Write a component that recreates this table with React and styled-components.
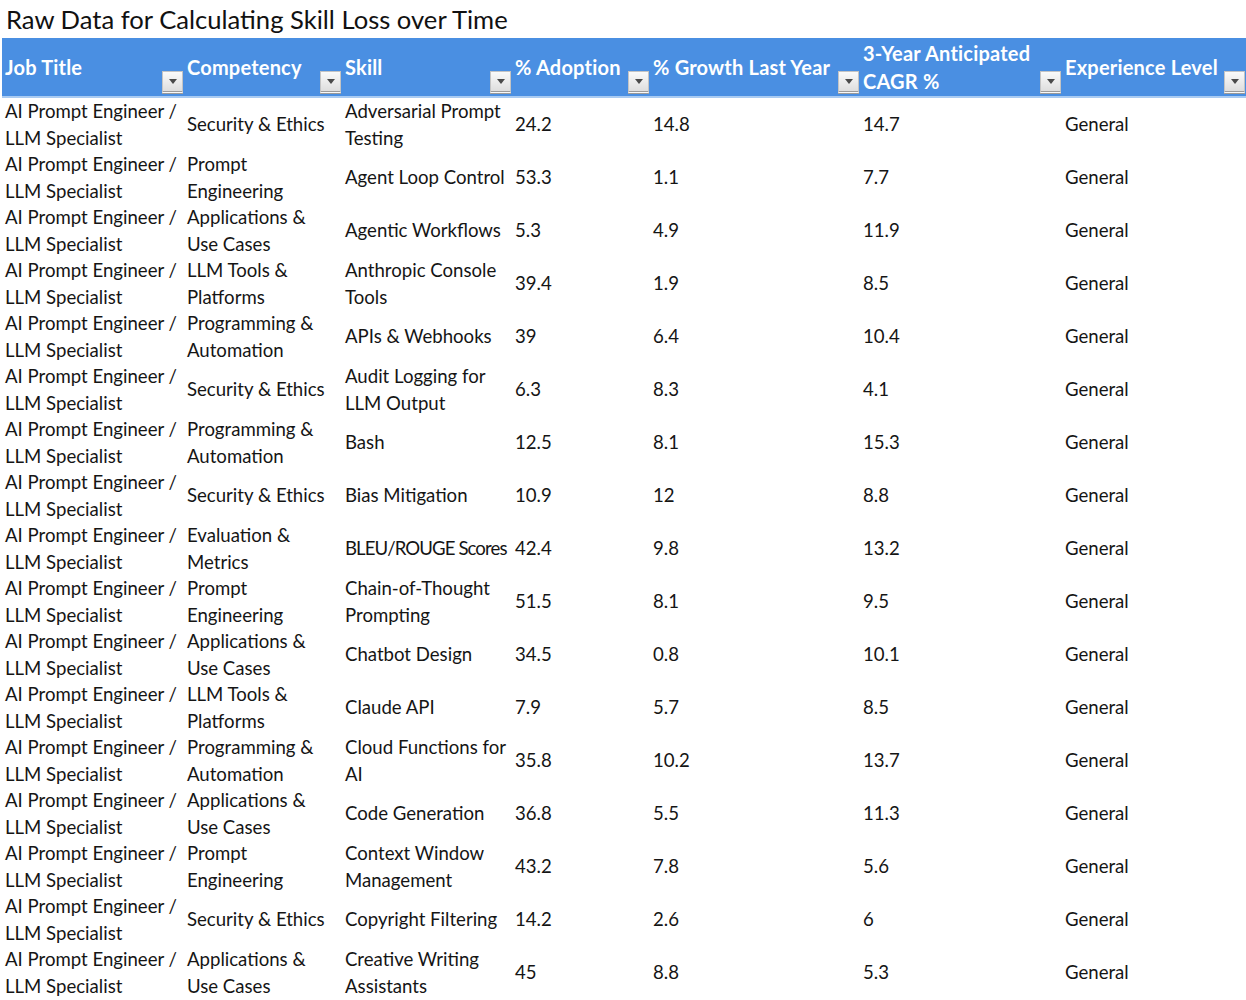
import React from 'react';
import styled, { createGlobalStyle } from 'styled-components';

const GlobalStyle = createGlobalStyle`
	body {
		margin: 0;
		background: #fff;
		font-family: Lato, 'Liberation Sans', sans-serif;
		color: #151515;
	}
`;

const Page = styled.div`
	width: 1246px;
	height: 1000px;
	overflow: hidden;
`;

const Title = styled.h1`
	margin: 0;
	padding: 4px 0 0 6px;
	height: 34px;
	font-size: 25.6px;
	font-weight: 400;
	line-height: 30px;
	color: #111;
`;

const Sheet = styled.table`
	margin-left: 2px;
	width: 1244px;
	table-layout: fixed;
	border-collapse: collapse;
`;

const HeadCell = styled.th`
	background: #4a8fe2;
	height: 58px;
	padding: 0;
	border-bottom: 2px solid #a9cbf2;
	color: #fff;
	font-size: 20px;
	font-weight: 700;
	letter-spacing: 0.2px;
	text-align: left;
	vertical-align: middle;
`;

const HeadInner = styled.div`
	display: flex;
	align-items: center;
	justify-content: space-between;
	height: 58px;
	padding-left: 3px;
`;

const HeadLabel = styled.span`
	line-height: 28px;
	white-space: pre;
`;

const FilterButton = styled.span`
	align-self: flex-end;
	flex: none;
	width: 19px;
	height: 19px;
	margin: 0 1px 2px 0;
	border: 1px solid #c4c4c4;
	border-bottom: 3px double #9a9a9a;
	background: linear-gradient(#fafafa, #dedede);
	display: flex;
	align-items: center;
	justify-content: center;

	&::after {
		content: '';
		border-left: 4px solid transparent;
		border-right: 4px solid transparent;
		border-top: 5px solid #4a4a4a;
	}
`;

const Cell = styled.td`
	height: 53px;
	padding: 0 0 0 3px;
	font-size: 18.6px;
	line-height: 26.5px;
	letter-spacing: ${p => (p.$condensed ? '-0.9px' : 'normal')};
	vertical-align: middle;
	white-space: pre;
`;

const columns = [
	{ label: 'Job Title', width: 182 },
	{ label: 'Competency', width: 158 },
	{ label: 'Skill', width: 170 },
	{ label: '% Adoption', width: 138 },
	{ label: '% Growth Last Year', width: 210 },
	{ label: '3-Year Anticipated\nCAGR %', width: 202 },
	{ label: 'Experience Level', width: 184 },
];

// capitals in Lato run wider than in the sheet's font
const condensed = ['BLEU/ROUGE Scores'];

const rows = [
	['Security & Ethics', 'Adversarial Prompt\nTesting', '24.2', '14.8', '14.7'],
	['Prompt\nEngineering', 'Agent Loop Control', '53.3', '1.1', '7.7'],
	['Applications &\nUse Cases', 'Agentic Workflows', '5.3', '4.9', '11.9'],
	['LLM Tools &\nPlatforms', 'Anthropic Console\nTools', '39.4', '1.9', '8.5'],
	['Programming &\nAutomation', 'APIs & Webhooks', '39', '6.4', '10.4'],
	['Security & Ethics', 'Audit Logging for\nLLM Output', '6.3', '8.3', '4.1'],
	['Programming &\nAutomation', 'Bash', '12.5', '8.1', '15.3'],
	['Security & Ethics', 'Bias Mitigation', '10.9', '12', '8.8'],
	['Evaluation &\nMetrics', 'BLEU/ROUGE Scores', '42.4', '9.8', '13.2'],
	['Prompt\nEngineering', 'Chain-of-Thought\nPrompting', '51.5', '8.1', '9.5'],
	['Applications &\nUse Cases', 'Chatbot Design', '34.5', '0.8', '10.1'],
	['LLM Tools &\nPlatforms', 'Claude API', '7.9', '5.7', '8.5'],
	['Programming &\nAutomation', 'Cloud Functions for\nAI', '35.8', '10.2', '13.7'],
	['Applications &\nUse Cases', 'Code Generation', '36.8', '5.5', '11.3'],
	['Prompt\nEngineering', 'Context Window\nManagement', '43.2', '7.8', '5.6'],
	['Security & Ethics', 'Copyright Filtering', '14.2', '2.6', '6'],
	['Applications &\nUse Cases', 'Creative Writing\nAssistants', '45', '8.8', '5.3'],
];

export default function App() {
	return (
		<Page>
			<GlobalStyle />
			<Title>Raw Data for Calculating Skill Loss over Time</Title>
			<Sheet>
				<colgroup>
					{columns.map(col => (
						<col key={col.label} style={{ width: col.width }} />
					))}
				</colgroup>
				<thead>
					<tr>
						{columns.map(col => (
							<HeadCell key={col.label}>
								<HeadInner>
									<HeadLabel>{col.label}</HeadLabel>
									<FilterButton />
								</HeadInner>
							</HeadCell>
						))}
					</tr>
				</thead>
				<tbody>
					{rows.map((row, key) => (
						<tr key={key}>
							<Cell>{'AI Prompt Engineer /\nLLM Specialist'}</Cell>
							{row.map((value, i) => (
								<Cell key={i} $condensed={condensed.includes(value)}>
									{value}
								</Cell>
							))}
							<Cell>General</Cell>
						</tr>
					))}
				</tbody>
			</Sheet>
		</Page>
	);
}
